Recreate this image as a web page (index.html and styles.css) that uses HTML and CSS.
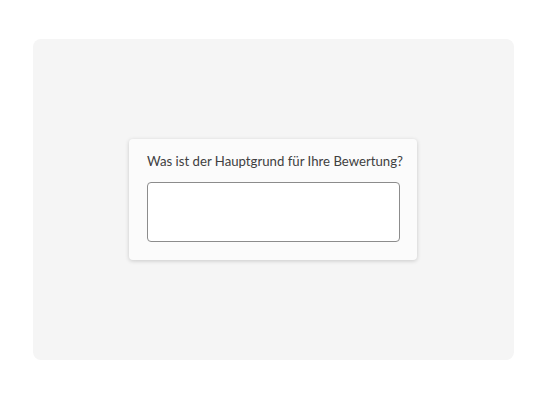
FILE: index.html
```html
<!DOCTYPE html>
<html>
<head>
<meta charset="utf-8">
<link rel="stylesheet" href="styles.css">
</head>
<body>
<div class="stage">
  <div class="panel">
    <div class="card">
      <label class="question" for="answer">Was ist der Hauptgrund für Ihre Bewertung?</label>
      <textarea id="answer" class="answer"></textarea>
    </div>
  </div>
</div>
</body>
</html>
```
FILE: styles.css
```css
html, body {
  margin: 0;
  padding: 0;
  background: #ffffff;
}
.stage {
  width: 547px;
  height: 400px;
  padding: 39px 33px 40px 33px;
  box-sizing: border-box;
}
.panel {
  width: 481px;
  height: 321px;
  box-sizing: border-box;
  padding-left: 96px;
  background: #f5f5f5;
  border-radius: 8px;
  display: flex;
  align-items: center;
  justify-content: flex-start;
}
.card {
  width: 288px;
  height: 121px;
  box-sizing: border-box;
  background: #fbfbfb;
  border-radius: 4px;
  box-shadow: 0 1px 4px rgba(0, 0, 0, 0.18);
  padding: 12px 17px 18px 18px;
  display: flex;
  flex-direction: column;
  gap: 11px;
}
.question {
  font-family: Lato, sans-serif;
  font-size: 13.2px;
  line-height: 20px;
  color: #404040;
  white-space: nowrap;
}
.answer {
  width: 253px;
  height: 60px;
  box-sizing: border-box;
  margin: 0;
  border: 1px solid #8c8c8c;
  border-radius: 4px;
  background: #ffffff;
  resize: none;
  outline: none;
}
```
